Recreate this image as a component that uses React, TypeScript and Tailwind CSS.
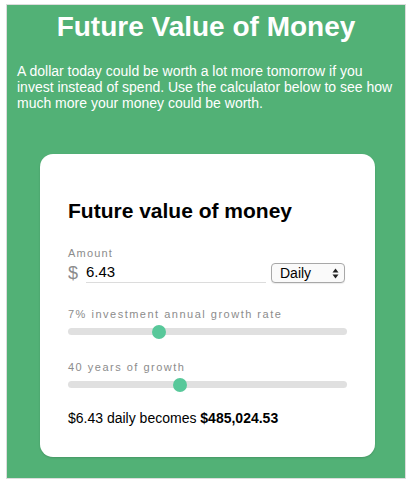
import React from 'react';

const font = { fontFamily: '"Liberation Sans", Arial, Helvetica, sans-serif' };

interface SliderProps {
	label: string;
	position: number;
}

const Slider = ({ label, position }: SliderProps) => {
	return (
		<div className="flex flex-col">
			<span className="text-[11px] leading-[14px] tracking-[1.5px] text-[#8c8c8c]">{label}</span>
			<div className="relative mt-[7px] h-[7px] w-[279px] rounded-full bg-[#e0e0e0]">
				<div
					className="absolute top-[-3.5px] h-[14px] w-[14px] rounded-full bg-[#58c89a]"
					style={{ left: `${position * 265}px` }}
				/>
			</div>
		</div>
	);
};

const App = () => {
	return (
		<div className="h-[484px] w-[410px] bg-white pt-[4px] pl-[6px]" style={font}>
			<div className="h-[475px] w-[400px] border border-[#dcdcdc] bg-[#52b176] pt-[6px] pl-[10px]">
				<h1 className="pr-[10px] text-center text-[28px] font-bold leading-[32px] text-white">
					Future Value of Money
				</h1>
				<p className="mt-[20px] pr-[10px] text-[14px] leading-[16px] text-white">
					A dollar today could be worth a lot more tomorrow if you invest instead of spend. Use the
					calculator below to see how much more your money could be worth.
				</p>
				<div className="mt-[43px] ml-[23px] h-[303px] w-[335px] rounded-[13px] bg-white pt-[45px] pl-[28px] shadow-[0_1px_2px_rgba(0,0,0,0.15)]">
					<h2 className="text-[21px] font-bold leading-[24px] text-black">Future value of money</h2>
					<span className="mt-[23px] block text-[11px] leading-[14px] tracking-[1.2px] text-[#8c8c8c]">Amount</span>
					<div className="mt-[3px] flex h-[20px] items-center">
						<span className="w-[18px] text-[18px] leading-[20px] text-[#8c8c8c]">$</span>
						<div className="flex h-[20px] w-[180px] items-center border-b border-[#dcdcdc] text-[15px] text-black">
							6.43
						</div>
						<div className="ml-[5px] flex h-[20px] w-[74px] items-center justify-between rounded-[4px] border border-[#a8a8a8] bg-[#fafafa] pr-[5px] pl-[8px] text-[14px] text-black shadow-[0_1px_1px_rgba(0,0,0,0.08)]">
							<span>Daily</span>
							<svg width="7" height="11" viewBox="0 0 7 11">
								<path d="M3.5 0.5 L6.5 4.5 L0.5 4.5 Z" fill="#222" />
								<path d="M3.5 10.5 L6.5 6.5 L0.5 6.5 Z" fill="#222" />
							</svg>
						</div>
					</div>
					<div className="mt-[24px]">
						<Slider label="7% investment annual growth rate" position={0.317} />
					</div>
					<div className="mt-[25px]">
						<Slider label="40 years of growth" position={0.396} />
					</div>
					<p className="mt-[21px] text-[14px] leading-[18px] text-black">
						$6.43 daily becomes <span className="font-bold">$485,024.53</span>
					</p>
				</div>
			</div>
		</div>
	);
};

export default App;
